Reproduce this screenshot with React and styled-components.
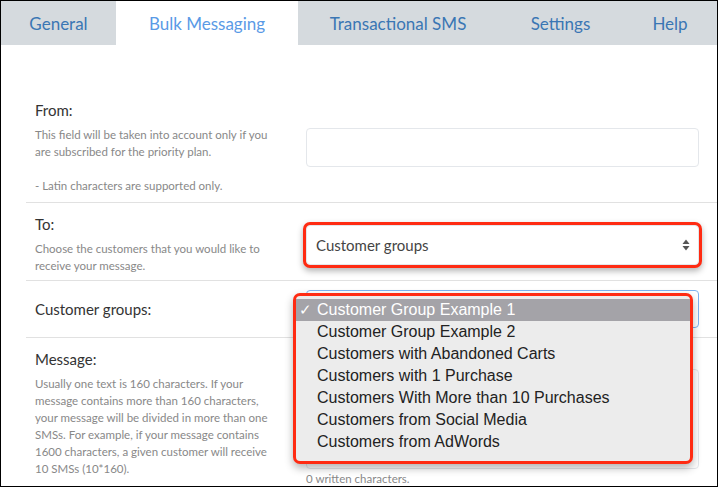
import React from "react";
import styled, { createGlobalStyle } from "styled-components";

const GlobalStyle = createGlobalStyle`
  body {
    margin: 0;
    background: #fff;
    font-family: Lato, "Open Sans", sans-serif;
  }
  * {
    box-sizing: border-box;
  }
`;

const tabs = [
  { label: "General", width: 115 },
  { label: "Bulk Messaging", width: 182 },
  { label: "Transactional SMS", width: 200 },
  { label: "Settings", width: 125 },
  { label: "Help", width: 94 },
];

const groups = [
  "Customer Group Example 1",
  "Customer Group Example 2",
  "Customers with Abandoned Carts",
  "Customers with 1 Purchase",
  "Customers With More than 10 Purchases",
  "Customers from Social Media",
  "Customers from AdWords",
];

const SelectArrows = () => (
  <svg width="8" height="12" viewBox="0 0 8 12">
    <path d="M4 0.5 L7.5 5 L0.5 5 Z" fill="#555" />
    <path d="M4 11.5 L7.5 7 L0.5 7 Z" fill="#555" />
  </svg>
);

const App = () => {
  return (
    <>
      <GlobalStyle />
      <Frame>
        <TabBar>
          {tabs.map((t) => (
            <Tab key={t.label} $width={t.width} $active={t.label === "Bulk Messaging"}>
              {t.label}
            </Tab>
          ))}
        </TabBar>
        <Content>
          <Row $pad="12px 0 8px 9px">
            <LeftCol>
              <Label>From:</Label>
              <Help>
                This field will be taken into account only if you are subscribed for the priority plan.
              </Help>
              <Help $gap>- Latin characters are supported only.</Help>
            </LeftCol>
            <TextInput />
          </Row>
          <Row $pad="12px 0 6px 9px">
            <LeftCol>
              <Label>To:</Label>
              <Help>Choose the customers that you would like to receive your message.</Help>
            </LeftCol>
            <SelectBox $marked>
              <span>Customer groups</span>
              <SelectArrows />
            </SelectBox>
          </Row>
          <Row $pad="9px 0 9px 9px">
            <LeftCol>
              <Label>Customer groups:</Label>
            </LeftCol>
            <MenuAnchor>
              <SelectBox $focused />
              <Menu>
                {groups.map((g, i) => (
                  <MenuItem key={g} $selected={i === 0}>
                    <Check>{i === 0 ? "✓" : ""}</Check>
                    {g}
                  </MenuItem>
                ))}
              </Menu>
            </MenuAnchor>
          </Row>
          <Row $pad="12px 0 0 9px" $last>
            <LeftCol>
              <Label>Message:</Label>
              <Help>
                Usually one text is 160 characters. If your message contains more than 160
                characters, your message will be divided in more than one SMSs. For example, if
                your message contains 1600 characters, a given customer will receive 10 SMSs
                (10*160).
              </Help>
            </LeftCol>
            <MessageCol>
              <TextArea />
              <Counter>0 written characters.</Counter>
            </MessageCol>
          </Row>
        </Content>
      </Frame>
    </>
  );
};

export default App;

const Frame = styled.div`
  width: 718px;
  height: 487px;
  border: 1px solid #000;
  overflow: hidden;
  background: #fff;
`;

const TabBar = styled.div`
  display: flex;
  height: 44px;
  background: #d5dade;
`;

const Tab = styled.div`
  display: flex;
  flex-shrink: 0;
  align-items: center;
  justify-content: center;
  width: ${(p) => p.$width}px;
  font-size: 17px;
  white-space: nowrap;
  color: ${(p) => (p.$active ? "#5a9ae6" : "#3a76b4")};
  background: ${(p) => (p.$active ? "#fff" : "transparent")};
`;

const Content = styled.div`
  padding: 44px 0 0 25px;
`;

const Row = styled.div`
  display: grid;
  grid-template-columns: 256px 393px;
  column-gap: 15px;
  align-items: ${(p) => (p.$last ? "start" : "center")};
  padding: ${(p) => p.$pad};
  border-bottom: ${(p) => (p.$last ? "none" : "1px solid #e1e1e1")};
`;

const LeftCol = styled.div`
  display: flex;
  flex-direction: column;
`;

const Label = styled.div`
  font-size: 15px;
  line-height: 18px;
  color: #333;
`;

const Help = styled.div`
  max-width: 240px;
  margin-top: ${(p) => (p.$gap ? "17px" : "7px")};
  font-size: 11.5px;
  line-height: 17px;
  color: #888;
`;

const TextInput = styled.div`
  height: 39px;
  border: 1px solid #e4e7eb;
  border-radius: 4px;
  background: #fff;
`;

const SelectBox = styled.div`
  height: ${(p) => (p.$focused ? "38px" : "40px")};
  display: flex;
  align-items: center;
  justify-content: space-between;
  padding: 0 8px 0 9px;
  font-size: 15px;
  color: #444;
  background: #fff;
  border: 1px solid ${(p) => (p.$focused ? "#7db2ee" : "#e4e7eb")};
  border-radius: 4px;
  box-shadow: ${(p) =>
    p.$marked ? "0 0 0 3px #ff2b12, 0 3px 6px 3px rgba(0, 0, 0, 0.3)" : "none"};
`;

const MenuAnchor = styled.div`
  position: relative;
`;

const Menu = styled.div`
  position: absolute;
  left: -10px;
  top: 6px;
  width: 394px;
  padding: 3px 0 8px;
  background: #ececec;
  border-radius: 4px;
  box-shadow: 0 0 0 3px #ff2b12, 0 4px 8px 3px rgba(0, 0, 0, 0.3);
  font-family: "Liberation Sans", Arial, sans-serif;
`;

const MenuItem = styled.div`
  display: flex;
  align-items: center;
  height: 22px;
  font-size: 16px;
  color: ${(p) => (p.$selected ? "#fff" : "#222")};
  background: ${(p) => (p.$selected ? "#a4a3a8" : "transparent")};
`;

const Check = styled.span`
  width: 21px;
  padding-left: 3px;
  font-size: 15px;
`;

const MessageCol = styled.div`
  padding-top: 19px;
`;

const TextArea = styled.div`
  height: 100px;
  border: 1px solid #e4e7eb;
  border-radius: 4px;
  background: #fff;
`;

const Counter = styled.div`
  margin-top: 1px;
  font-size: 11.5px;
  line-height: 17px;
  color: #888;
`;
